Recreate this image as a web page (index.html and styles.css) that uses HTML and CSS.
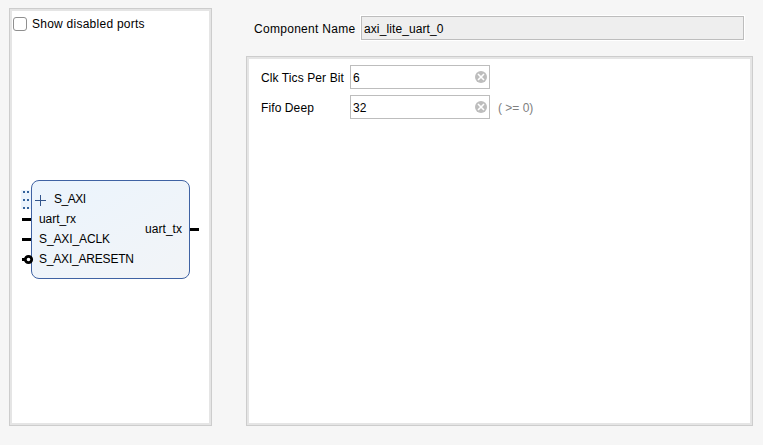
FILE: index.html
```html
<!DOCTYPE html>
<html lang="en">
<head>
<meta charset="utf-8">
<title>Component configuration</title>
<link rel="stylesheet" href="styles.css">
</head>
<body>
<main class="layout">
  <section class="panel ports">
    <label class="toggle"><input class="check" type="checkbox"><span class="toggle-text">Show disabled ports</span></label>
    <svg class="symbol" width="180" height="102" viewBox="21 179 180 102">
      <defs>
        <linearGradient id="fill" x1="0" y1="0" x2="1" y2="1">
          <stop offset="0" stop-color="#ebf4fd"/>
          <stop offset="1" stop-color="#f2f4f7"/>
        </linearGradient>
      </defs>
      <rect x="21" y="190" width="10" height="19" fill="#ebf4fd"/>
      <rect x="31.500" y="180.500" width="158" height="98" rx="7.500" fill="url(#fill)" stroke="#3f62a3"/>
      <g fill="#33639c">
        <rect x="23" y="191" width="2" height="2"/><rect x="27" y="191" width="2" height="2"/>
        <rect x="23" y="199" width="2" height="2"/><rect x="27" y="199" width="2" height="2"/>
        <rect x="23" y="207" width="2" height="2"/><rect x="27" y="207" width="2" height="2"/>
      </g>
      <path d="M35 200.500H46M40.500 195V206" stroke="#33558c" fill="none"/>
      <path d="M22 219.500H31M22 239.500H31M22 259.500H25M190 229.500H199" stroke="#000" stroke-width="3" fill="none"/>
      <circle cx="28.500" cy="259.500" r="3.200" fill="#fff" stroke="#000" stroke-width="2.800"/>
      <g class="pins">
        <text x="54" y="203" textLength="32">S_AXI</text>
        <text x="39" y="223" textLength="37">uart_rx</text>
        <text x="39" y="243" textLength="71">S_AXI_ACLK</text>
        <text x="39" y="263" textLength="95">S_AXI_ARESETN</text>
        <text x="145" y="233" textLength="37">uart_tx</text>
      </g>
    </svg>
  </section>
  <section class="settings">
    <div class="name-row">
      <label class="name-label" for="name">Component Name</label>
      <input class="field name" id="name" value="axi_lite_uart_0" readonly>
    </div>
    <div class="panel params">
      <div class="param">
        <label class="param-label" for="tics">Clk Tics Per Bit</label>
        <div class="field value"><input class="entry" id="tics" value="6"><svg class="clear" width="12" height="12" viewBox="0 0 12 12"><circle cx="6" cy="6" r="6"/><path d="M3 3L9 9M9 3L3 9"/></svg></div>
      </div>
      <div class="param">
        <label class="param-label" for="fifo">Fifo Deep</label>
        <div class="field value"><input class="entry" id="fifo" value="32"><svg class="clear" width="12" height="12" viewBox="0 0 12 12"><circle cx="6" cy="6" r="6"/><path d="M3 3L9 9M9 3L3 9"/></svg></div>
        <span class="hint">( &gt;= 0)</span>
      </div>
    </div>
  </section>
</main>
</body>
</html>
```
FILE: styles.css
```css
* { box-sizing: border-box; }
body {
  margin: 0;
  background: #f6f6f6;
  color: #000;
  font: 12px/14px "Liberation Sans", Arial, sans-serif;
}
input { font: inherit; color: inherit; letter-spacing: inherit; }
.layout {
  display: flex;
  gap: 34px;
  height: 445px;
  padding: 8px 10px 19px 9px;
}
.panel {
  background: #fff;
  border: 1px solid #cdcdcd;
  box-shadow: inset 0 0 0 2px #e5e5e5;
}
.ports {
  display: flex;
  flex-direction: column;
  width: 203px;
  padding: 7px 3px;
}
.toggle {
  display: flex;
  align-items: center;
  gap: 5px;
  height: 15px;
}
.check {
  appearance: none;
  width: 14px;
  height: 14px;
  margin: 0;
  background: #fff;
  border: 1px solid #8f8f8f;
  border-radius: 3px;
}
.toggle-text { letter-spacing: 0.25px; }
.symbol {
  display: block;
  margin: 148px 0 0 8px;
}
.pins { font-size: 12px; fill: #000; }
.settings {
  flex: 1;
  display: flex;
  flex-direction: column;
  gap: 16px;
  letter-spacing: 0.1px;
}
.name-row {
  display: flex;
  align-items: center;
  gap: 5px;
  padding: 8px 9px 0 8px;
}
.name-label {
  width: 102px;
  padding-top: 1px;
  letter-spacing: 0.29px;
  white-space: nowrap;
}
.field {
  height: 24px;
  background: #fff;
  border: 1px solid #bdbdbd;
}
.name {
  flex: 1;
  min-width: 0;
  padding: 1px 2px 0;
  background: #eee;
  outline: 1px solid #fff;
}
.params {
  flex: 1;
  display: flex;
  flex-direction: column;
  gap: 6px;
  padding: 8px 14px;
}
.param { display: flex; align-items: center; }
.param-label {
  width: 89px;
  padding-top: 1px;
  white-space: nowrap;
}
.value {
  display: flex;
  align-items: center;
  width: 140px;
  padding: 0 2px;
}
.entry {
  flex: 1;
  min-width: 0;
  padding: 1px 0 0;
  border: 0;
  background: none;
}
.clear { flex: none; fill: #bdbdbd; }
.clear path { stroke: #fff; stroke-width: 1.6; }
.hint {
  margin-left: 8px;
  padding-top: 1px;
  color: #808080;
  letter-spacing: 0;
}
```
